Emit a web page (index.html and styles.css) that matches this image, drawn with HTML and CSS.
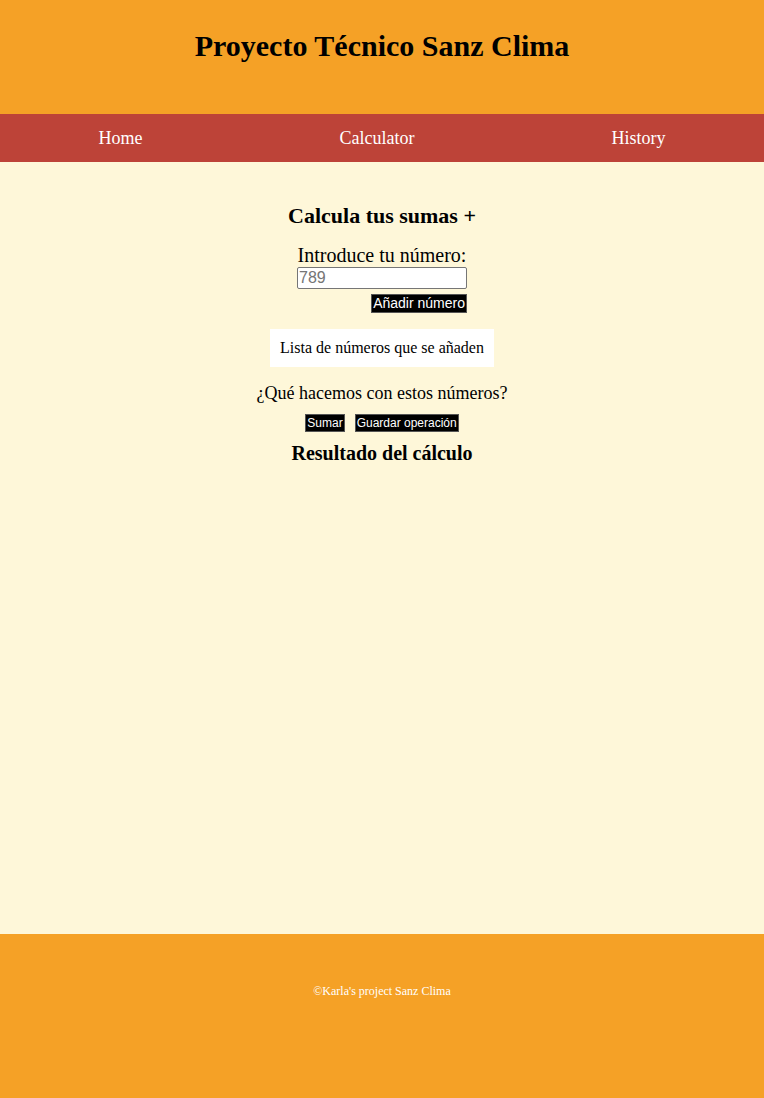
FILE: index.html
```html
<!DOCTYPE html>
<html lang="es">
<head>
<meta charset="utf-8">
<title>Proyecto Técnico Sanz Clima</title>
<link rel="stylesheet" href="styles.css">
</head>
<body>
<header class="site-header">
  <h1 class="site-title">Proyecto Técnico Sanz Clima</h1>
</header>
<nav class="site-nav">
  <a class="nav-link" href="#">Home</a>
  <a class="nav-link" href="#">Calculator</a>
  <a class="nav-link" href="#">History</a>
</nav>
<main class="main">
  <h2 class="calc-title">Calcula tus sumas +</h2>
  <form class="add-form">
    <label class="add-label" for="num">Introduce tu número:</label>
    <input class="add-input" id="num" type="text" placeholder="789">
    <button class="btn btn-add" type="button">Añadir número</button>
  </form>
  <div class="list-box">Lista de números que se añaden</div>
  <p class="question">¿Qué hacemos con estos números?</p>
  <div class="actions">
    <button class="btn btn-small" type="button">Sumar</button>
    <button class="btn btn-small" type="button">Guardar operación</button>
  </div>
  <h3 class="result-title">Resultado del cálculo</h3>
</main>
<footer class="site-footer">
  <p class="footer-text">©Karla's project Sanz Clima</p>
</footer>
</body>
</html>
```

FILE: styles.css
```css
* { box-sizing: border-box; }
html, body { margin: 0; padding: 0; }
body {
  font-family: "Liberation Serif", "Times New Roman", serif;
  background: #fef7d9;
  color: #000;
}
.site-header {
  background: #f5a126;
  height: 114px;
  display: flex;
  justify-content: center;
  padding-top: 28px;
}
.site-title {
  margin: 0;
  font-size: 30px;
  font-weight: bold;
  line-height: 36px;
}
.site-nav {
  background: #bd4338;
  height: 48px;
  display: flex;
  justify-content: space-around;
  align-items: center;
}
.nav-link {
  color: #fff;
  text-decoration: none;
  font-size: 18px;
}
.main {
  height: 772px;
  display: flex;
  flex-direction: column;
  align-items: center;
  padding-top: 40px;
}
.calc-title {
  margin: 0 0 15px;
  font-size: 22px;
  line-height: 27px;
}
.add-form {
  display: flex;
  flex-direction: column;
  align-items: center;
}
.add-label {
  font-size: 20px;
  line-height: 23px;
}
.add-input {
  width: 170px;
  height: 22px;
  font-family: "Liberation Sans", Arial, sans-serif;
  font-size: 16px;
  padding: 0 1px;
  border: 1px solid #767676;
  border-radius: 2px;
  background: #fff;
}
.add-input::placeholder { color: #757575; }
.btn {
  background: #000;
  color: #fff;
  font-family: "Liberation Sans", Arial, sans-serif;
  border: 1px solid #555;
  padding: 0 1px;
  cursor: pointer;
}
.btn-add {
  align-self: flex-end;
  margin-top: 5px;
  font-size: 14px;
  height: 19px;
  line-height: 17px;
}
.list-box {
  margin-top: 16px;
  background: #fff;
  padding: 10px;
  font-size: 16px;
  line-height: 18px;
}
.question {
  margin: 16px 0 0;
  font-size: 18px;
  line-height: 20px;
}
.actions {
  display: flex;
  gap: 10px;
  margin-top: 11px;
}
.btn-small {
  font-size: 12px;
  height: 18px;
  line-height: 16px;
}
.result-title {
  margin: 10px 0 0;
  font-size: 20px;
  line-height: 23px;
}
.site-footer {
  background: #f5a126;
  height: 164px;
  display: flex;
  justify-content: center;
  padding-top: 50px;
}
.footer-text {
  margin: 0;
  color: #fff;
  font-size: 12px;
  line-height: 14px;
}
```
